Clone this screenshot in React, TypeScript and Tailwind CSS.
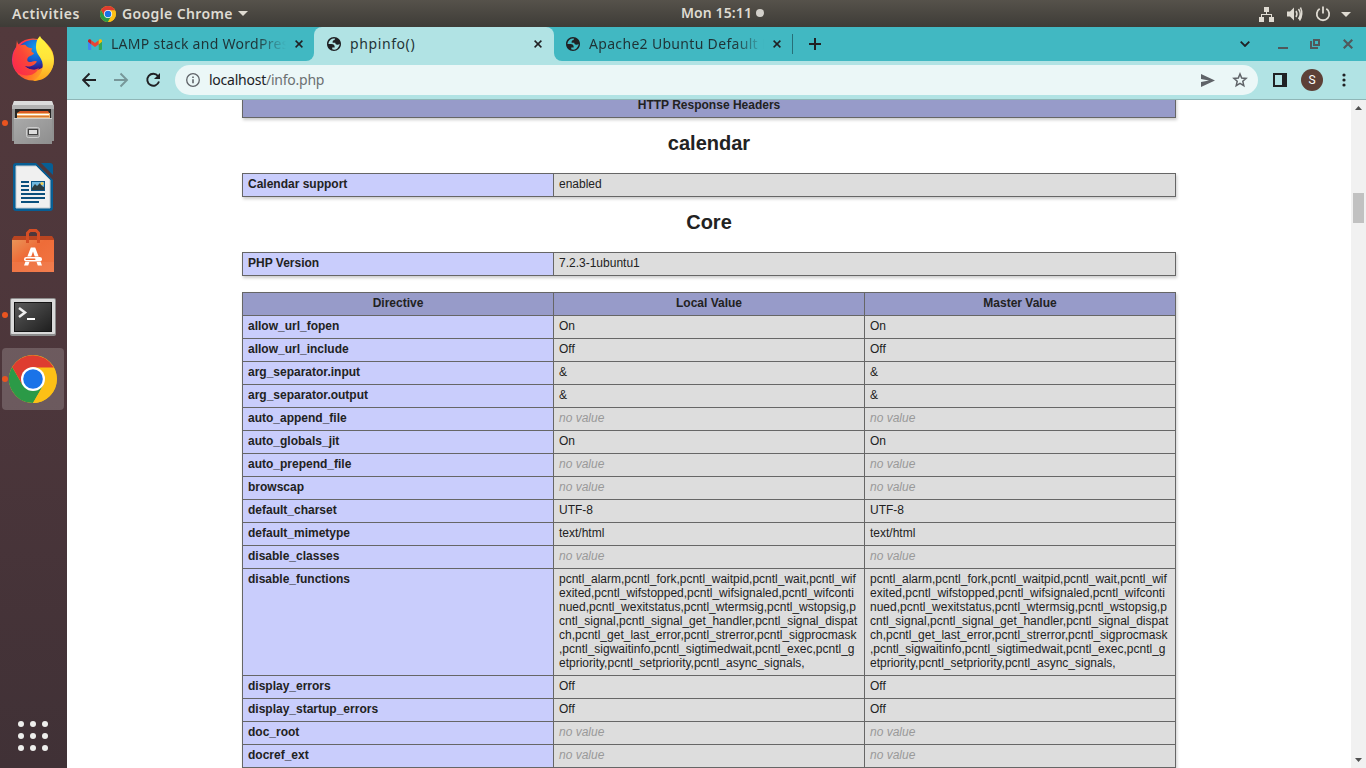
import type { ReactNode } from 'react';

const NONE = null;
const pcntl =
  'pcntl_alarm,pcntl_fork,pcntl_waitpid,pcntl_wait,pcntl_wifexited,pcntl_wifstopped,pcntl_wifsignaled,pcntl_wifcontinued,pcntl_wexitstatus,pcntl_wtermsig,pcntl_wstopsig,pcntl_signal,pcntl_signal_get_handler,pcntl_signal_dispatch,pcntl_get_last_error,pcntl_strerror,pcntl_sigprocmask,pcntl_sigwaitinfo,pcntl_sigtimedwait,pcntl_exec,pcntl_getpriority,pcntl_setpriority,pcntl_async_signals,';

const directives: [string, string | null][] = [
  ['allow_url_fopen', 'On'],
  ['allow_url_include', 'Off'],
  ['arg_separator.input', '&'],
  ['arg_separator.output', '&'],
  ['auto_append_file', NONE],
  ['auto_globals_jit', 'On'],
  ['auto_prepend_file', NONE],
  ['browscap', NONE],
  ['default_charset', 'UTF-8'],
  ['default_mimetype', 'text/html'],
  ['disable_classes', NONE],
  ['disable_functions', pcntl],
  ['display_errors', 'Off'],
  ['display_startup_errors', 'Off'],
  ['doc_root', NONE],
  ['docref_ext', NONE],
];

function ChromeLogo({ size }: { size: number }) {
  return (
    <svg width={size} height={size} viewBox="0 0 48 48" className="shrink-0">
      <circle cx="24" cy="24" r="24" fill="#fcc016" />
      <path d="M3.2 12A24 24 0 0 0 24 48L34.4 30 24 24 13.6 30z" fill="#2b9a47" />
      <path d="M24 12.500h20.800A24 24 0 0 1 24 48l10.400-18z" fill="#fcc016" />
      <path d="M3.200 12A24 24 0 0 1 44.800 12.500H24L13.600 30z" fill="#de3c30" />
      <circle cx="24" cy="24" r="12" fill="#fff" />
      <circle cx="24" cy="24" r="9.800" fill="#1a73e8" />
    </svg>
  );
}

function Globe() {
  return (
    <svg width="14" height="14" viewBox="2 2 20 20" className="shrink-0" fill="#202124" fillRule="evenodd">
      <path d="M12 2C6.480 2 2 6.480 2 12s4.480 10 10 10 10-4.480 10-10S17.520 2 12 2zM4 12h4.400c3.407.022 4.922 1.730 4.543 5.127H9.488v2.470a8.004 8.004 0 0 0 10.498-8.083C19.327 12.504 18.332 13 17 13c-2.137 0-3.206-.916-3.206-2.750h-3.748c-.274-2.728.683-4.092 2.870-4.092 0-.975.327-1.597.811-1.970A8.004 8.004 0 0 0 4 12z" />
    </svg>
  );
}

function Gmail() {
  return (
    <svg width="14" height="11" viewBox="0 0 14 11" className="shrink-0">
      <path d="M0 2.500 3.200 5v6H1a1 1 0 0 1-1-1z" fill="#4285f4" />
      <path d="M14 2.500 10.800 5v6H13a1 1 0 0 0 1-1z" fill="#34a853" />
      <path d="M3.200 1.200 7 4.100l3.800-2.900V5.200L7 8 3.200 5.200z" fill="#ea4335" />
      <path d="M0 2.700V1.800C0 .3 1.600-.3 2.600.6l.6.5v4.100z" fill="#c5221f" />
      <path d="M14 2.700V1.800C14 .3 12.400-.3 11.400.6l-.6.5v4.100z" fill="#fbbc04" />
    </svg>
  );
}

function Cross({ size = 8, color = '#202124', w = 1.5 }: { size?: number; color?: string; w?: number }) {
  return (
    <svg width={size} height={size} viewBox="0 0 8 8" className="shrink-0">
      <path d="M.6.6l6.800 6.800M7.400.6L.6 7.400" stroke={color} strokeWidth={w} />
    </svg>
  );
}

function TopBar() {
  return (
    <header className="flex h-[27px] shrink-0 items-center bg-linear-to-b from-[#56524b] to-[#3e3c37] font-['Noto_Sans',sans-serif] text-[14px] leading-5 font-semibold text-[#dfdbd2]">
      <span className="w-[88px] pl-3 tracking-[0.55px]">Activities</span>
      <div className="flex w-[593px] items-center pl-3">
        <ChromeLogo size={16} />
        <span className="ml-1.5 w-[111px] whitespace-nowrap tracking-[0.38px]">Google Chrome</span>
        <svg width="10" height="5" className="ml-[5px]"><path d="M0 0h10L5 5z" fill="#dfdbd2" /></svg>
      </div>
      <span className="w-[72px] whitespace-nowrap pb-px tracking-[0.1px]">Mon 15:11</span>
      <span className="ml-[3px] mb-px size-2 rounded-full bg-[#d3d0ca]" />
      <svg width="98" height="20" viewBox="1258 3 98 20" className="ml-auto mr-[10px]" fill="#dfdbd2">
        <path d="M1264 6h5v5h-2v2h5v3h2v5h-5v-5h2v-2h-9v2h2v5h-5v-5h2v-3h5v-2h-2z" />
        <path d="M1287 10.500h3l4-4v13l-4-4h-3z" />
        <path d="M1296 10q2 3 0 6M1298.500 8q3.500 5 0 10M1300.500 6.500q3 6.500-1 13" fill="none" stroke="#dfdbd2" strokeWidth="1.500" />
        <path d="M1319.700 7.800a6.200 6.200 0 1 0 6.600 0M1323 5.500v7" fill="none" stroke="#dfdbd2" strokeWidth="1.800" />
        <path d="M1341 11h10l-5 5z" />
      </svg>
    </header>
  );
}

function DockItem({ children, running, active }: { children: ReactNode; running?: boolean; active?: boolean }) {
  return (
    <div className="relative flex h-16 w-[66px] shrink-0 items-center justify-center">
      {active && <span className="absolute left-[2px] top-[1px] size-[62px] rounded-[4px] bg-white/18" />}
      {running && <span className="absolute left-[2px] top-[29px] size-[6px] rounded-full bg-[#e95420]" />}
      <div className="relative flex items-center justify-center">{children}</div>
    </div>
  );
}

function Dock() {
  return (
    <nav className="flex w-[67px] shrink-0 flex-col bg-linear-to-b from-[#52393c] via-[#4c363b] to-[#403136]">
      <DockItem>
        <svg width="44" height="46" viewBox="0 0 44 46" className="mb-[2px]">
          <defs>
            <linearGradient id="fl" x1="0" y1="0" x2="0" y2="1">
              <stop offset="0" stopColor="#fff43f" /><stop offset=".5" stopColor="#ffe43a" /><stop offset="1" stopColor="#ffa01b" />
            </linearGradient>
            <linearGradient id="fo" x1="0" y1=".3" x2="1" y2=".6">
              <stop offset="0" stopColor="#e9229f" /><stop offset=".2" stopColor="#ff3647" /><stop offset=".6" stopColor="#ff7f24" /><stop offset="1" stopColor="#ffc52b" />
            </linearGradient>
            <linearGradient id="fh" x1="0" y1="1" x2="1" y2="0">
              <stop offset="0" stopColor="#fb2251" /><stop offset=".5" stopColor="#fa4638" /><stop offset="1" stopColor="#ff8a26" />
            </linearGradient>
            <radialGradient id="fb" cx=".55" cy=".25" r=".7">
              <stop offset="0" stopColor="#139bf1" /><stop offset=".6" stopColor="#145fce" /><stop offset="1" stopColor="#341887" />
            </radialGradient>
          </defs>
          <circle cx="22" cy="24.500" r="21" fill="url(#fo)" />
          <path d="M9 11C13 6 20 4 26 5l10 10c3 8-1 20-12 20-8 0-14-5-14-12z" fill="url(#fb)" />
          <path d="M6 5c0 2 1 4 2.500 5.500 2-.5 4-1 6-.5 1.500 2.500 4 3 7 3.500-2 2-1 4 1.500 4.500-1 3-4 2-6 4.500-1 2-1 3 0 4 3 2 6-2 9 0-2 4-8 6-12 4.500 3 4 9 5 14 2-4 8-14 10-22 4C1 32 0 20 5 13z" fill="url(#fh)" />
          <path d="M29 1c1 3 4 4 6 7l5 7c4 7 4 17-2 24-4 5-10 7-16 7 9-5 12-15 8-22-2-4-5-6-5-12 0-5 1-8 4-11z" fill="url(#fl)" />
        </svg>
      </DockItem>
      <DockItem running>
        <svg width="42" height="44" viewBox="0 0 42 44" className="mb-[3px]">
          <defs>
            <linearGradient id="cab" x1="0" y1="0" x2="1" y2="1"><stop stopColor="#aaa" /><stop offset="1" stopColor="#8e8e8e" /></linearGradient>
          </defs>
          <path d="M2 1h38l2 8v32H0V9z" fill="#909090" />
          <path d="M2 1h38l1.500 4H.5z" fill="#dcdcdc" />
          <path d="M0 5h42v4H0z" fill="#b2b2b2" />
          <path d="M3 9h36v9H3z" fill="#252525" />
          <path d="M5 13l3-2h28l2 3v4H5z" fill="#d85a25" />
          <path d="M5 13h33v6H5z" fill="#efb270" />
          <path d="M5 14.500h32" stroke="#fff" strokeWidth="1" />
          <path d="M5 16.500h32" stroke="#d97731" strokeWidth="1" />
          <path d="M2 18h38v26H2z" fill="url(#cab)" />
          <path d="M2 18.500h38" stroke="#d0d0d0" />
          <rect x="14.500" y="27.500" width="13" height="10" rx="2" fill="#999" stroke="#cecece" />
          <rect x="16.500" y="29.500" width="9" height="5" fill="#ddd" stroke="#444" />
        </svg>
      </DockItem>
      <DockItem>
        <svg width="40" height="48" viewBox="0 0 40 48">
          <path d="M3 0h20l17 17v28q0 3-3 3H3q-3 0-3-3V3q0-3 3-3z" fill="#075e94" />
          <path d="M3 3h20l14 14v28H3z" fill="#f0f0f0" stroke="#c5cbd0" />
          <path d="M28 0h9q3 0 3 3v9z" fill="#075e94" />
          <path d="M8 19h8M8 23h8M8 27h8M8 31h24M8 35h24M8 39h18" stroke="#0a4f7c" strokeWidth="2" />
          <path d="M18 18h14v10H18z" fill="#0a5588" />
          <path d="M19 19h12v8H19z" fill="#70b8df" />
          <path d="M19 27v-2l3-4 2 2 3-3 2 3 2 1v3z" fill="#2d3c40" />
          <circle cx="29" cy="20.500" r="1.500" fill="#f3cf55" />
        </svg>
      </DockItem>
      <DockItem>
        <svg width="42" height="44" viewBox="0 0 42 44" className="mb-px">
          <defs><linearGradient id="bag" x1="0" y1="0" x2="1" y2="1"><stop stopColor="#e99458" /><stop offset=".4" stopColor="#ee6c38" /><stop offset="1" stopColor="#f27543" /></linearGradient></defs>
          <path d="M2 7h38l2 3v5H0v-5z" fill="#b94521" />
          <path d="M0 11h42v32H0z" fill="url(#bag)" />
          <path d="M0 33h42v10H0z" fill="#fff" opacity=".06" />
          <path d="M15.500 14V4l2.500-2.500h6L26.500 4v10" fill="none" stroke="#d64e25" strokeWidth="3" />
          <path d="M12 36.500L18.800 18.500h4.400L30 36.500h-4.200L21 22.500 16.200 36.500z" fill="#fff" />
          <rect x="11.500" y="27.500" width="19" height="5.500" rx="2.750" fill="#ee6b37" />
          <rect x="12" y="28" width="18" height="4.500" rx="2.250" fill="#fff" />
          <rect x="13.500" y="29.500" width="10" height="1.600" rx=".8" fill="#ef6930" />
        </svg>
      </DockItem>
      <DockItem running>
        <svg width="46" height="38" viewBox="0 0 46 38" className="mt-[4px]">
          <defs><linearGradient id="term" x1="0" y1="0" x2="1" y2="1"><stop stopColor="#595959" /><stop offset="1" stopColor="#1f1f1f" /></linearGradient></defs>
          <rect width="46" height="38" rx="2" fill="#8c8c8c" />
          <rect x="1" y="1" width="44" height="35" rx="1" fill="#dadada" />
          <path d="M4 4h38v30H4z" fill="#151515" />
          <path d="M5 5h36v28H5z" fill="url(#term)" />
          <path d="M9 10l6 4.500L9 19" fill="none" stroke="#eee" strokeWidth="2.500" />
          <path d="M17 21h8" stroke="#fff" strokeWidth="2" />
        </svg>
      </DockItem>
      <DockItem running active>
        <ChromeLogo size={48} />
      </DockItem>
      <div className="mt-auto mb-[17px] ml-[18px] grid size-[30px] grid-cols-3 gap-[6px]">
        {Array.from({ length: 9 }, (_, i) => (
          <span key={i} className="size-[6px] rounded-full bg-[#eeeeec]" />
        ))}
      </div>
    </nav>
  );
}

function TabStrip() {
  return (
    <div className="flex h-[34px] items-stretch bg-[#b1e3e4] text-[14px] leading-5 text-[#1f3336]">
      <div className="flex w-[247px] items-center rounded-br-lg bg-[#41b8c2] pl-[21px]">
        <Gmail />
        <span className="ml-[9px] w-[176px] overflow-hidden whitespace-nowrap tracking-[0.28px] mask-[linear-gradient(to_right,#000_145px,transparent_175px)]">LAMP stack and WordPress</span>
        <span className="ml-2"><Cross /></span>
      </div>
      <div className="flex w-[240px] bg-[#41b8c2]">
        <div className="flex w-full items-center rounded-t-lg bg-[#b1e3e4] pl-[13px]">
          <Globe />
          <span className="ml-[9px] w-[184px] tracking-[0.6px]">phpinfo()</span>
          <Cross />
        </div>
      </div>
      <div className="flex grow items-center rounded-bl-lg bg-[#41b8c2] pl-3">
        <Globe />
        <span className="ml-[9px] w-[176px] overflow-hidden whitespace-nowrap tracking-[0.32px] mask-[linear-gradient(to_right,#000_145px,transparent_175px)]">Apache2 Ubuntu Default Page</span>
        <span className="ml-2"><Cross /></span>
        <span className="ml-[11px] h-5 w-px bg-[#276f78]" />
        <svg width="12" height="12" className="ml-4"><path d="M6 0v12M0 6h12" stroke="#202124" strokeWidth="2" /></svg>
        <svg width="10" height="6" className="ml-auto"><path d="M.7.7L5 5 9.300.7" fill="none" stroke="#202124" strokeWidth="1.800" /></svg>
        <span className="ml-7 mt-2 h-[2px] w-[10px] bg-[#50585b]" />
        <svg width="10" height="10" className="ml-[22px]" fill="none" stroke="#50585b" strokeWidth="2">
          <path d="M4 1h5v5H4zM1 2v7h7" />
        </svg>
        <span className="ml-[23px] mr-[13px]"><Cross size={10} color="#50585b" w={1.700} /></span>
      </div>
    </div>
  );
}

function Toolbar() {
  return (
    <div className="flex h-[39px] items-center border-b border-[#8fb6b7] bg-[#b1e3e4]">
      <svg width="80" height="16" viewBox="0 0 80 16" className="ml-[15px]" fill="none" strokeWidth="1.900">
        <path d="M14 8H1M7.500 1.500L1 8l6.500 6.500" stroke="#202124" />
        <path d="M32 8h13M38.500 1.500L45 8l-6.500 6.500" stroke="#779799" />
        <path d="M76 4A6 6 0 1 0 77 9.500" stroke="#202124" />
        <path d="M78 1v6h-6z" fill="#202124" />
      </svg>
      <div className="ml-[13px] flex h-[30px] w-[1083px] items-center rounded-full bg-[#ebf7f7] pl-[11px] text-[14px] leading-5">
        <svg width="14" height="14" viewBox="0 0 14 14" fill="none" stroke="#5f6368" strokeWidth="1.300">
          <circle cx="7" cy="7" r="6.300" /><path d="M7 6.200v4M7 3.500v1.500" strokeWidth="1.600" />
        </svg>
        <span className="ml-[9px] tracking-[-0.24px] text-[#202124]">localhost<span className="text-[#6b7072]">/info.php</span></span>
        <svg width="14" height="13" viewBox="0 0 14 13" className="ml-auto" fill="#5f6368"><path d="M0 0l14 6.500L0 13V8l8-1.500L0 5z" /></svg>
        <svg width="16" height="16" viewBox="0 0 16 16" className="ml-[17px] mr-[10px]" fill="none" stroke="#5f6368" strokeWidth="1.500">
          <path d="M8 2l1.700 4 4.400.4-3.300 2.900 1 4.300L8 11.300l-3.800 2.300 1-4.300L1.900 6.400 6.300 6z" />
        </svg>
      </div>
      <svg width="14" height="14" className="ml-[15px]"><path d="M0 0h14v14H0zM2 2v10h7V2z" fill="#202124" fillRule="evenodd" /></svg>
      <span className="ml-[14px] flex size-[22px] items-center justify-center rounded-full bg-[#5d4037] font-['Roboto',sans-serif] text-[12px] text-white">S</span>
      <svg width="4" height="14" className="ml-[19px]" fill="#202124"><circle cx="2" cy="2" r="1.600" /><circle cx="2" cy="7" r="1.600" /><circle cx="2" cy="12" r="1.600" /></svg>
    </div>
  );
}

const table = 'w-[934px] table-fixed border-collapse shadow-[1px_2px_3px_#ccc]';
const cell = 'border border-[#666] px-[5px] pt-[3px] pb-[5px] align-top';
const label = 'bg-[#c9cdfc] font-bold';
const value = 'bg-[#ddd] [overflow-wrap:anywhere]';
const head = 'bg-[#979bc9] font-bold text-center';

function InfoPair({ name, text }: { name: string; text: string }) {
  return (
    <table className={table}>
      <colgroup><col className="w-[311px]" /><col /></colgroup>
      <tbody>
        <tr>
          <td className={`${cell} ${label}`}>{name}</td>
          <td className={`${cell} ${value}`}>{text}</td>
        </tr>
      </tbody>
    </table>
  );
}

function Value({ text }: { text: string | null }) {
  return <td className={`${cell} ${value}`}>{text ?? <i className="text-[#999]">no value</i>}</td>;
}

function Page() {
  return (
    <main className="flex min-h-0 grow bg-white">
      <div className="flex grow flex-col items-center overflow-hidden font-['Liberation_Sans',Arial,sans-serif] text-[12px] leading-[14px] text-[#222]">
        <div className="-mt-[6px] flex shrink-0 flex-col items-center">
          <table className={table}>
            <tbody><tr><th className={`${cell} ${head}`}>HTTP Response Headers</th></tr></tbody>
          </table>
          <h2 className="flex h-[55px] items-center pb-[5px] text-[20px] font-bold">calendar</h2>
          <InfoPair name="Calendar support" text="enabled" />
          <h2 className="flex h-[55px] items-center pb-[5px] text-[20px] font-bold">Core</h2>
          <InfoPair name="PHP Version" text="7.2.3-1ubuntu1" />
          <table className={`${table} mt-4`}>
            <thead>
              <tr>
                <th className={`${cell} ${head}`}>Directive</th>
                <th className={`${cell} ${head}`}>Local Value</th>
                <th className={`${cell} ${head}`}>Master Value</th>
              </tr>
            </thead>
            <tbody>
              {directives.map(([name, v]) => (
                <tr key={name}>
                  <td className={`${cell} ${label}`}>{name}</td>
                  <Value text={v} />
                  <Value text={v} />
                </tr>
              ))}
            </tbody>
          </table>
        </div>
      </div>
      <div className="flex w-[15px] shrink-0 flex-col items-center justify-between bg-[#f1f1f1] pt-[6px] pb-[6px]">
        <svg width="7" height="4"><path d="M0 4L3.500 0 7 4z" fill="#505050" /></svg>
        <span className="mt-[83px] h-[30px] w-[11px] bg-[#c1c1c1]" />
        <svg width="7" height="4" className="mt-auto"><path d="M0 0l3.500 4L7 0z" fill="#505050" /></svg>
      </div>
    </main>
  );
}

export default function App() {
  return (
    <div className="flex h-screen w-screen flex-col overflow-hidden">
      <TopBar />
      <div className="flex min-h-0 grow">
        <Dock />
        <div className="flex min-w-0 grow flex-col font-['Noto_Sans',sans-serif]">
          <TabStrip />
          <Toolbar />
          <Page />
        </div>
      </div>
    </div>
  );
}
